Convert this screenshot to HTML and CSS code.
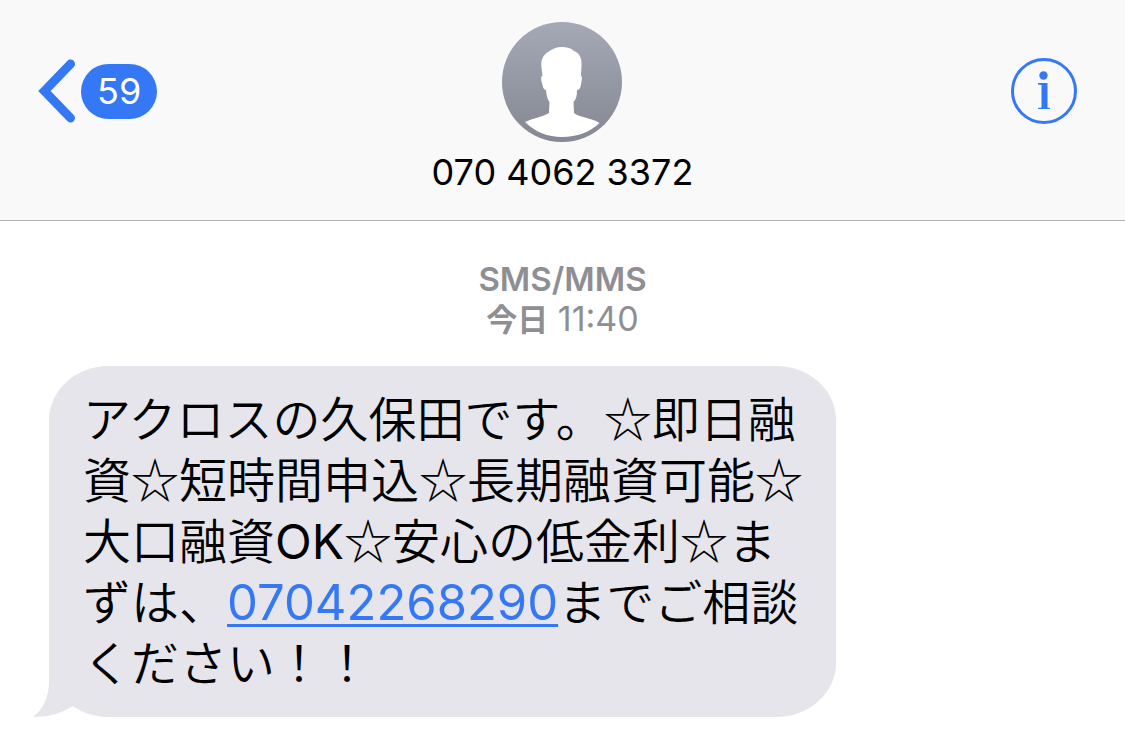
FILE: index.html
```html
<!DOCTYPE html>
<html lang="ja">
<head>
<meta charset="utf-8">
<meta name="viewport" content="width=device-width, initial-scale=1">
<title>070 4062 3372</title>
<link rel="stylesheet" href="styles.css">
</head>
<body>
<header class="header">
  <button class="back" type="button" aria-label="戻る">
    <svg class="back-icon" viewBox="0 0 38 64" aria-hidden="true"><path d="M32.500 5L6.500 32L32.500 59" fill="none" stroke="#3478f6" stroke-width="9" stroke-linecap="round" stroke-linejoin="miter"/></svg>
    <span class="badge">59</span>
  </button>
  <div class="contact">
    <svg class="avatar" viewBox="0 0 120 120" aria-hidden="true">
      <defs>
        <linearGradient id="shade" x1="0" y1="0" x2="0" y2="1"><stop offset="0" stop-color="#a4a9b6"/><stop offset="1" stop-color="#848892"/></linearGradient>
      </defs>
      <circle cx="60" cy="60" r="60" fill="url(#shade)"/>
      <path d="M60 25C65 25 69 26 72 29C78 31 80 37 79.500 44L79 54C80.500 54 80 58 79 62C78.500 66 77.500 68 75 68C75 73 74.500 77 71.500 80L72 91C79 96 90 96 97.500 101C88 110 75 115 60 115C46 115 33 110 23 100C31 96 41 95 47 91L47.500 80C45 77 44.500 73 44 68C41.500 68 41 65 40 61C39 57 38.500 54 40.500 54L39.500 46C38.500 38 41 33 46 30C50 27 54 25 60 25Z" fill="#fff"/>
    </svg>
    <h1 class="number">070 4062 3372</h1>
  </div>
  <button class="info" type="button" aria-label="詳細">
    <svg class="info-icon" viewBox="0 0 66 66" aria-hidden="true">
      <circle cx="33" cy="33" r="31.500" fill="none" stroke="#3478f6" stroke-width="3"/>
      <circle cx="32.500" cy="17.500" r="4.200" fill="#3478f6"/>
      <path d="M27 25H36.500V49.500L39 50V51H27V50L30.500 49.500V27L27 26.500Z" fill="#3478f6"/>
    </svg>
  </button>
</header>
<main class="thread">
  <div class="stamp">
    <p class="service">SMS/MMS</p>
    <p class="time"><span class="day">今日</span> 11:40</p>
  </div>
  <div class="bubble">
    <svg class="tail" viewBox="0 0 52 56" aria-hidden="true"><path d="M16 0V20C16 37 10 48 0 56C14 56 27 53 38 46L52 40V0Z" fill="#e5e5eb"/></svg>
    <p class="message">アクロスの久保田です。☆即日融資☆短時間申込☆長期融資可能☆大口融資<span class="latin">OK</span>☆安心の低金利☆まずは、<a class="latin tel" href="tel:07042268290">07042268290</a>までご相談ください！！</p>
  </div>
</main>
</body>
</html>
```

FILE: styles.css
```css
* {
  box-sizing: border-box;
}

body {
  margin: 0;
  background: #fff;
  color: #000;
  font-family: Inter, "Noto Sans CJK JP", sans-serif;
}

h1,
p {
  margin: 0;
}

button {
  padding: 0;
  border: 0;
  background: none;
  font: inherit;
  cursor: pointer;
}

.header {
  display: grid;
  grid-template-columns: 1fr auto 1fr;
  align-items: start;
  padding: 22px 38px 26px;
  border-bottom: 1px solid #b2b2b4;
  background: #f9f9f9;
}

.back {
  display: flex;
  align-items: center;
  justify-self: start;
  gap: 5px;
  margin-top: 37px;
}

.back-icon {
  width: 38px;
  height: 64px;
}

.badge {
  padding: 0 16px;
  border-radius: 28px;
  background: #3478f6;
  color: #fff;
  font-size: 36px;
  font-weight: 400;
  line-height: 55px;
}

.contact {
  display: flex;
  flex-direction: column;
  align-items: center;
  gap: 8px;
}

.avatar {
  width: 120px;
  height: 120px;
}

.number {
  font-size: 36px;
  font-weight: 400;
  line-height: 44px;
}

.info {
  justify-self: end;
  margin: 36px 10px 0 0;
}

.info-icon {
  display: block;
  width: 66px;
  height: 66px;
}

.thread {
  padding: 39px 49px;
}

.stamp {
  color: #8e8e93;
  line-height: 39px;
  text-align: center;
}

.service {
  font-size: 33px;
  font-weight: 600;
}

.time {
  font-size: 34px;
  font-weight: 400;
}

.day {
  font-size: 31px;
  font-weight: 700;
  line-height: 31px;
}

.bubble {
  position: relative;
  isolation: isolate;
  width: fit-content;
  max-width: 787px;
  margin-top: 28px;
  padding: 20px 30px 26px 34px;
  border-radius: 60px / 54px;
  background: #e5e5eb;
}

.message {
  font-family: "Noto Sans CJK JP", sans-serif;
  font-size: 48px;
  font-weight: 350;
  line-height: 61px;
}

.latin {
  font-family: Inter, sans-serif;
  font-weight: 400;
  line-height: 48px;
}

.tel {
  color: #3478f6;
  font-size: 49px;
  text-decoration-thickness: 3px;
  text-underline-offset: 4px;
}

.tail {
  position: absolute;
  z-index: -1;
  bottom: 0;
  left: -16px;
  width: 52px;
  height: 56px;
}
```
